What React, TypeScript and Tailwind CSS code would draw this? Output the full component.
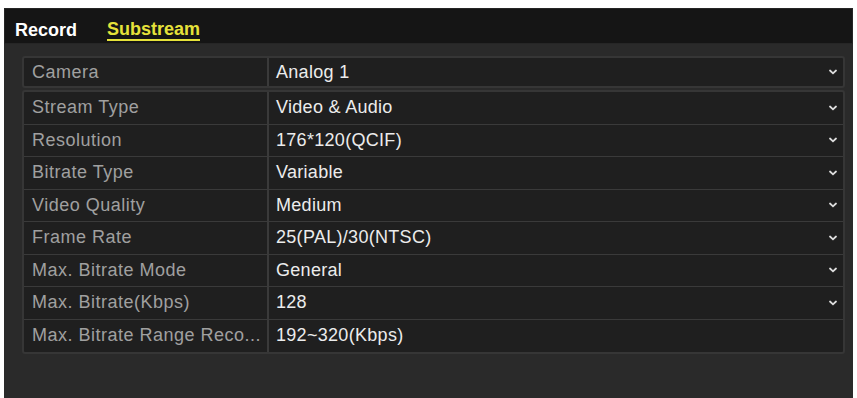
const rows: [string, string, boolean][] = [
  ["Stream Type", "Video & Audio", true],
  ["Resolution", "176*120(QCIF)", true],
  ["Bitrate Type", "Variable", true],
  ["Video Quality", "Medium", true],
  ["Frame Rate", "25(PAL)/30(NTSC)", true],
  ["Max. Bitrate Mode", "General", true],
  ["Max. Bitrate(Kbps)", "128", true],
  ["Max. Bitrate Range Reco...", "192~320(Kbps)", false],
];

function Chevron() {
  return (
    <svg width="8" height="6" viewBox="0 0 8 6" className="shrink-0">
      <path d="M1 1.5 L4 4.3 L7 1.5" fill="none" stroke="#dcdcdc" strokeWidth="1.8" strokeLinecap="round" />
    </svg>
  );
}

function Row({ label, value, select, h }: { label: string; value: string; select: boolean; h: string }) {
  return (
    <div className={`flex ${h} border-b border-[#3a3a3a] last:border-b-0`}>
      <div className="flex w-[245px] shrink-0 items-center overflow-hidden border-r-2 border-[#3a3a3a] pl-2 tracking-[0.5px] whitespace-nowrap text-[#a0a0a0]">
        {label}
      </div>
      <div className="flex flex-1 items-center justify-between pl-[7px] pr-[6px] text-[#ececec]">
        <span className="tracking-[0.3px]">{value}</span>
        {select ? <Chevron /> : null}
      </div>
    </div>
  );
}

export default function App() {
  return (
    <div className="h-[398px] w-[857px] bg-white pl-1 pr-1 pt-2 font-['Liberation_Sans',Arial,sans-serif] text-[18px]">
      <div className="flex h-full flex-col bg-[#2a2a2a]">
        <div className="flex h-9 items-center gap-[30px] border border-[#262626] bg-[#151515] pl-[10px] pt-2">
          <span className="font-bold leading-[20px] text-white">Record</span>
          <span className="border-b-2 border-[#e6e23a] font-bold leading-[19px] text-[#e6e23a]">Substream</span>
        </div>
        <div className="pl-[18px] pr-2 pt-3">
          <div className="overflow-hidden rounded-[3px] border-2 border-[#363636] bg-[#1f1f1f]">
            <Row label="Camera" value="Analog 1" select h="h-[28px]" />
          </div>
          <div className="mt-[2px] overflow-hidden rounded-[3px] border-2 border-[#363636] bg-[#1f1f1f]">
            {rows.map(([l, v, s]) => (
              <Row key={l} label={l} value={v} select={s} h="h-[32.5px]" />
            ))}
          </div>
        </div>
      </div>
    </div>
  );
}
